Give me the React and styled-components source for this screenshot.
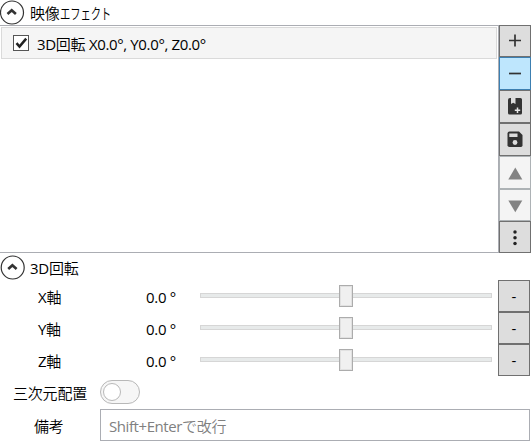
import React from 'react';
import styled, { createGlobalStyle } from 'styled-components';

const Global = createGlobalStyle`
  * { box-sizing: border-box; }
  body { margin: 0; background: #fff; overflow: hidden; }
`;
const Page = styled.main`
  width: 531px; height: 442px; display: flex; flex-direction: column;
  background: #fff; color: #000;
  font: 15px/20px "Open Sans", "Noto Sans CJK JP", sans-serif;
`;
const Text = styled.span`
  display: block; white-space: pre; flex: none;
  letter-spacing: ${p => p.$track || 0}px;
  transform: translateY(${p => p.$dy || 0}px);
`;
const Cjk = styled.span`font-weight: 350; letter-spacing: -0.2px;`;
const Kana = styled.span`
  display: inline-block; transform: scaleX(${p => p.$scale}); transform-origin: left;
`;
const Header = styled.header`
  height: ${p => p.$height}px; flex: none; display: flex; align-items: flex-start;
  padding-top: ${p => p.$top}px; gap: 5px;
`;
const Chevron = styled.svg`display: block; flex: none; width: 25px; height: 25px;`;
const EffectPanel = styled.section`
  height: 228px; flex: none; display: flex;
`;
const List = styled.div`
  flex: 1; border: 1px solid #abadb3; border-left: 0;
  padding: 1px 1px 0 1px;
`;
const ListRow = styled.div`
  height: 32px; display: flex; align-items: center; padding-left: 11px; gap: 8px;
  background: #f5f5f5; border: 1px solid #dadada;
`;
const CheckBox = styled.svg`display: block; width: 16px; height: 16px;`;
const Tools = styled.div`
  width: 32px; display: grid; grid-template-rows: 32px 33px 33px 33px 33px 32px 32px;
`;
const tones = {
  normal: ['#dddddd', '#707070'],
  active: ['#bee6fd', '#3c7fb1'],
  disabled: ['#f4f4f4', '#adb2b5'],
};
const Button = styled.button`
  padding: 0; margin: 0; display: flex; align-items: center; justify-content: center;
  width: 32px; height: 100%; font: inherit; color: #000;
  background: ${p => tones[p.$tone || 'normal'][0]};
  border: 1px solid ${p => tones[p.$tone || 'normal'][1]};
  svg { display: block; width: 20px; height: 20px; }
`;
const Axis = styled.div`
  height: 32px; flex: none; display: grid; align-items: center;
  grid-template-columns: 38px 108px 54px 292px 6px 32px;
`;
const Slider = styled.div`
  height: 32px; display: flex; align-items: center; justify-content: center;
  background: linear-gradient(#e7eaea, #e7eaea) 1px 14px / 290px 3px no-repeat,
    linear-gradient(#d6d6d6, #d6d6d6) 0 13px / 292px 5px no-repeat;
`;
const Thumb = styled.div`
  width: 14px; height: 22px; background: #f0f0f0; border: 1px solid #acacac;
  box-shadow: inset 0 0 0 1px #e1e1e1;
`;
const Setting = styled.div`
  height: ${p => p.$height}px; flex: none; display: grid; align-items: center;
  grid-template-columns: 100px 430px;
`;
const Label = styled.div`padding-left: ${p => p.$left}px;`;
const Toggle = styled.div`
  width: 40px; height: 24px; padding: 2px; border: 1px solid #b8b8b8;
  border-radius: 12px; background: #f6f6f6;
`;
const Knob = styled.div`
  width: 18px; height: 18px; background: #fff; border: 1px solid #b8b8b8; border-radius: 50%;
`;
const Input = styled.div`
  height: 32px; display: flex; align-items: center; padding-left: 8px;
  border: 1px solid #abadb3; color: #808080;
`;

function Expander({ shift }) {
  return <Chevron viewBox={`${-shift} 0 25 25`} fill="none" stroke="#333">
    <circle cx="12.3" cy="12.5" r="11.5" strokeWidth="1.2" />
    <path d="M7.8 14 12 10.2 16.2 14" strokeWidth="2.6" />
  </Chevron>;
}

const icons = [
  <path d="M4 9.5H16M10 3.5V15.5" stroke="#333" strokeWidth="1.7" />,
  <path d="M4 9.5H16" stroke="#333" strokeWidth="1.7" />,
  <g>
    <path d="M5 1H6V7L8.2 5.7 10.5 7V1H15.5Q17 1 17 2.5V16Q17 17.5 15.5 17.5H4.5Q3 17.5 3 16V3Q3 1 5 1Z" fill="#333" />
    <path d="M9.8 13.3H15.2M12.5 10.6V16" stroke="#e8e8e8" strokeWidth="1.5" />
  </g>,
  <g>
    <path d="M4.5 1.5H14L17.5 5V15.3Q17.5 17 16 17H4.5Q2.5 17 2.5 15.3V3.5Q2.5 1.5 4.5 1.5Z" fill="#333" />
    <path d="M4.3 3.5H12.5V7H4.3Z" fill="#dddddd" /><circle cx="10" cy="12.5" r="2.4" fill="#dddddd" />
  </g>,
  <path d="M10.3 4.6 17.3 16.4H3.3Z" fill="#838383" />,
  <path d="M3.3 5.5H17.3L10.3 17.3Z" fill="#838383" />,
  <g fill="#222"><circle cx="10" cy="5" r="1.75" /><circle cx="10" cy="10.8" r="1.75" /><circle cx="10" cy="16.5" r="1.75" /></g>,
];
const iconTones = ['normal', 'active', 'normal', 'normal', 'disabled', 'disabled', 'normal'];

export default function App() {
  return <Page>
    <Global />
    <Header $height={25} $top={0}>
      <Expander shift={-0.3} />
      <Text $dy={3}><Cjk>映像<Kana $scale={0.69}>エフェクト</Kana></Cjk></Text>
    </Header>
    <EffectPanel>
      <List>
        <ListRow>
          <CheckBox viewBox="0 0 16 16" fill="none" stroke="#333">
            <rect x=".5" y=".5" width="15" height="15" fill="#fff" stroke="#555" />
            <path d="M3.5 8.2 6.5 11.6 13.2 3.6" stroke="#222" strokeWidth="2.5" />
          </CheckBox>
          <Text $dy={1} $track={-0.36}>3D<Cjk>回転</Cjk> X0.0°, Y0.0°, Z0.0°</Text>
        </ListRow>
      </List>
      <Tools>
        {icons.map((icon, i) => <Button key={i} $tone={iconTones[i]} disabled={iconTones[i] === 'disabled'}>
          <svg viewBox="0 0 20 20">{icon}</svg>
        </Button>)}
      </Tools>
    </EffectPanel>
    <Header $height={27} $top={2}>
      <Expander shift={0.4} />
      <Text $dy={3} $track={-0.3}>3D<Cjk>回転</Cjk></Text>
    </Header>
    {['X', 'Y', 'Z'].map(axis => <Axis key={axis}>
      <span />
      <Text $dy={1} $track={-0.3}>{axis}<Cjk>軸</Cjk></Text>
      <Text $dy={1} $track={-0.3}>0.0 °</Text>
      <Slider><Thumb /></Slider>
      <span />
      <Button>-</Button>
    </Axis>)}
    <Setting $height={32}>
      <Label $left={13}><Text $dy={1}><Cjk>三次元配置</Cjk></Text></Label>
      <Toggle><Knob /></Toggle>
    </Setting>
    <Setting $height={34}>
      <Label $left={34}><Text $dy={1}><Cjk>備考</Cjk></Text></Label>
      <Input><Text $dy={1} $track={-0.42}>Shift+Enter<Cjk>で改行</Cjk></Text></Input>
    </Setting>
  </Page>;
}
